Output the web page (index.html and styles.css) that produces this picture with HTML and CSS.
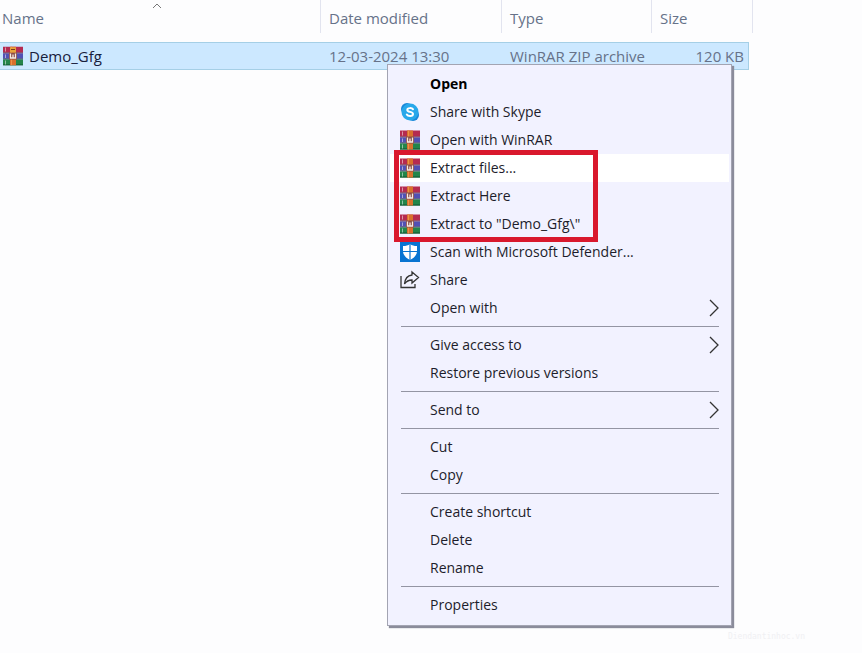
FILE: index.html
```html
<!DOCTYPE html>
<html lang="en">
<head>
    <meta charset="UTF-8">
    <meta name="viewport" content="width=device-width, initial-scale=1.0">
    <title>File Explorer</title>
    <link rel="stylesheet" href="styles.css">
</head>
<body>
    <!-- Shared icons -->
    <svg class="sprite" aria-hidden="true">
        <symbol id="winrar" viewBox="0 0 20 19">
            <rect width="20" height="6" fill="#b52b50"/>
            <rect y="6" width="20" height="1" fill="#5b1635"/>
            <rect y="7" width="20" height="5" fill="#5150b4"/>
            <rect y="12" width="20" height="1" fill="#24264f"/>
            <rect y="13" width="20" height="6" fill="#23854a"/>
            <rect y="18" width="20" height="1" fill="#155232"/>
            <path d="M2.5 1v4M2.5 8v3.500M2.500 14v4" stroke="#fff" stroke-opacity=".5"/>
            <rect x="7" width="6" height="19" fill="#d9702c"/>
            <path d="M8.500 0v19" stroke="#ec9148"/>
            <rect x="6" y="6" width="8" height="7" fill="#8a4c48"/>
            <path d="M7.500 7v4.500h5V7M10 8v3" fill="none" stroke="#f6ece4" stroke-width="1.300"/>
        </symbol>
    </svg>

    <table class="files">
        <colgroup>
            <col class="col-name">
            <col class="col-date">
            <col class="col-type">
            <col class="col-size">
        </colgroup>
        <thead>
            <tr>
                <th>Name
                    <svg class="sort" viewBox="0 0 10 6"><path d="M1 5l4-4 4 4"/></svg>
                </th>
                <th>Date modified</th>
                <th>Type</th>
                <th>Size</th>
            </tr>
        </thead>
        <tbody>
            <tr>
                <td class="name">
                    <div class="file">
                        <svg class="icon" viewBox="0 0 20 19">
                            <use href="#winrar"/>
                            <path d="M7 1h6v5H7z" fill="#e8a33c"/>
                            <path d="M8 3h4" stroke="#7a3b1c"/>
                        </svg>
                        Demo_Gfg
                    </div>
                </td>
                <td>12-03-2024 13:30</td>
                <td>WinRAR ZIP archive</td>
                <td class="size">120 KB</td>
            </tr>
        </tbody>
    </table>

    <div class="menu">
        <button class="item default">Open</button>
        <button class="item">
            <svg class="icon" viewBox="0 0 20 20">
                <circle cx="7" cy="7" r="6" fill="#1687d9"/>
                <circle cx="13" cy="13" r="6" fill="#1687d9"/>
                <circle cx="10" cy="10" r="8.500" fill="#28a8ea"/>
                <path d="M13 7.200C12.200 5.900 7.300 5.400 7.300 7.900c0 2.600 5.700 1.400 5.700 4.100 0 2.700-5.200 2.300-6.200.6" fill="none" stroke="#fff" stroke-width="2" stroke-linecap="round"/>
            </svg>
            Share with Skype
        </button>
        <button class="item"><svg class="icon"><use href="#winrar"/></svg>Open with WinRAR</button>
        <div class="extract">
            <button class="item active"><svg class="icon"><use href="#winrar"/></svg>Extract files...</button>
            <button class="item"><svg class="icon"><use href="#winrar"/></svg>Extract Here</button>
            <button class="item"><svg class="icon"><use href="#winrar"/></svg>Extract to "Demo_Gfg\"</button>
        </div>
        <button class="item">
            <svg class="icon" viewBox="0 0 20 20">
                <rect width="20" height="20" fill="#0874d1"/>
                <path d="M10 2c2 1.500 4 2 7 2v5c0 4-3 7-7 9-4-2-7-5-7-9V4c3 0 5-.5 7-2z" fill="#fff"/>
                <path d="M10 2v16M3 9.500h14" stroke="#0874d1" stroke-width="1.200"/>
            </svg>
            Scan with Microsoft Defender...
        </button>
        <button class="item">
            <svg class="icon line" viewBox="0 0 20 20">
                <path d="M1 6v11.500h14V14"/>
                <path d="M12 2l6.500 5.500L12 13v-3c-3.500 0-5.500 1-7.500 4C5 8.500 8 5.500 12 5z"/>
            </svg>
            Share
        </button>
        <button class="item">Open with<svg class="arrow" viewBox="0 0 10 18"><path d="M1 1l8 8-8 8"/></svg></button>
        <hr>
        <button class="item">Give access to<svg class="arrow" viewBox="0 0 10 18"><path d="M1 1l8 8-8 8"/></svg></button>
        <button class="item">Restore previous versions</button>
        <hr>
        <button class="item">Send to<svg class="arrow" viewBox="0 0 10 18"><path d="M1 1l8 8-8 8"/></svg></button>
        <hr>
        <button class="item">Cut</button>
        <button class="item">Copy</button>
        <hr>
        <button class="item">Create shortcut</button>
        <button class="item">Delete</button>
        <button class="item">Rename</button>
        <hr>
        <button class="item">Properties</button>
    </div>

    <div class="watermark">Diendantinhoc.vn</div>
</body>
</html>
```

FILE: styles.css
```css
* { box-sizing: border-box; margin: 0; padding: 0; }
body { background: #fdfdfe; color: #1d1d2b; min-height: 100vh; position: relative; font: 15px/20px 'Open Sans', 'Segoe UI', sans-serif; }
.sprite { position: absolute; width: 0; height: 0; }
.icon { width: 20px; height: 20px; flex: none; }

/* File list */
.files { border-collapse: separate; border-spacing: 0; table-layout: fixed; width: 749px; color: #667289; }
.col-name { width: 321px; }
.col-date { width: 181px; }
.col-type { width: 150px; }
.files th { position: relative; height: 42px; padding: 8px 8px 14px; font-weight: normal; text-align: left; vertical-align: top; }
.files th:first-child { padding-left: 2px; }
.files th::after { content: ""; position: absolute; right: 0; top: 0; width: 1px; height: 33px; background: #e2e4ef; }
.files th:last-child::after { right: -4px; }
.sort { position: absolute; left: 152px; top: 3px; width: 10px; height: 6px; fill: none; stroke: #777; }
.files td { height: 28px; padding: 0 8px; background: #cce8ff; border: solid #a5cfe6; border-width: 1px 0; white-space: nowrap; }
.files td:last-child { border-right-width: 1px; }
.files .name { padding-left: 3px; color: #17203c; }
.files .size { padding-right: 4px; text-align: right; }
.file { display: flex; align-items: center; gap: 6px; }

/* Context menu */
.menu { position: absolute; left: 387px; top: 64px; width: 345px; padding: 5px 2px 6px; background: #f2f2ff; border: 1px solid #a3a4b2; box-shadow: 2px 2px 1px #8b8c9b; font-size: 14px; }
.item { position: relative; display: flex; align-items: center; width: 100%; height: 28px; padding-left: 40px; background: none; border: none; color: inherit; font: inherit; text-align: left; }
.item:hover, .active { background: #fff; }
.default { color: #000; font-weight: bold; }
.item .icon { margin-left: -30px; margin-right: 10px; }
.line { fill: none; stroke: #333; stroke-width: 1.3; }
.arrow { width: 10px; height: 18px; margin-left: auto; margin-right: 10px; fill: none; stroke: #333; stroke-width: 1.3; }
.menu hr { height: 1px; margin: 4px 10px 4px 11px; border: none; background: #9495a3; }

/* Frame around the extract commands */
.extract { position: relative; }
.extract::after { content: ""; position: absolute; left: 4px; top: -4px; bottom: -4px; width: 194px; border: 5px solid #d9182d; pointer-events: none; }

.watermark { position: absolute; right: 57px; bottom: 8px; color: #f0f0f3; font: 8px/16px 'DejaVu Sans Mono', monospace; }
```
